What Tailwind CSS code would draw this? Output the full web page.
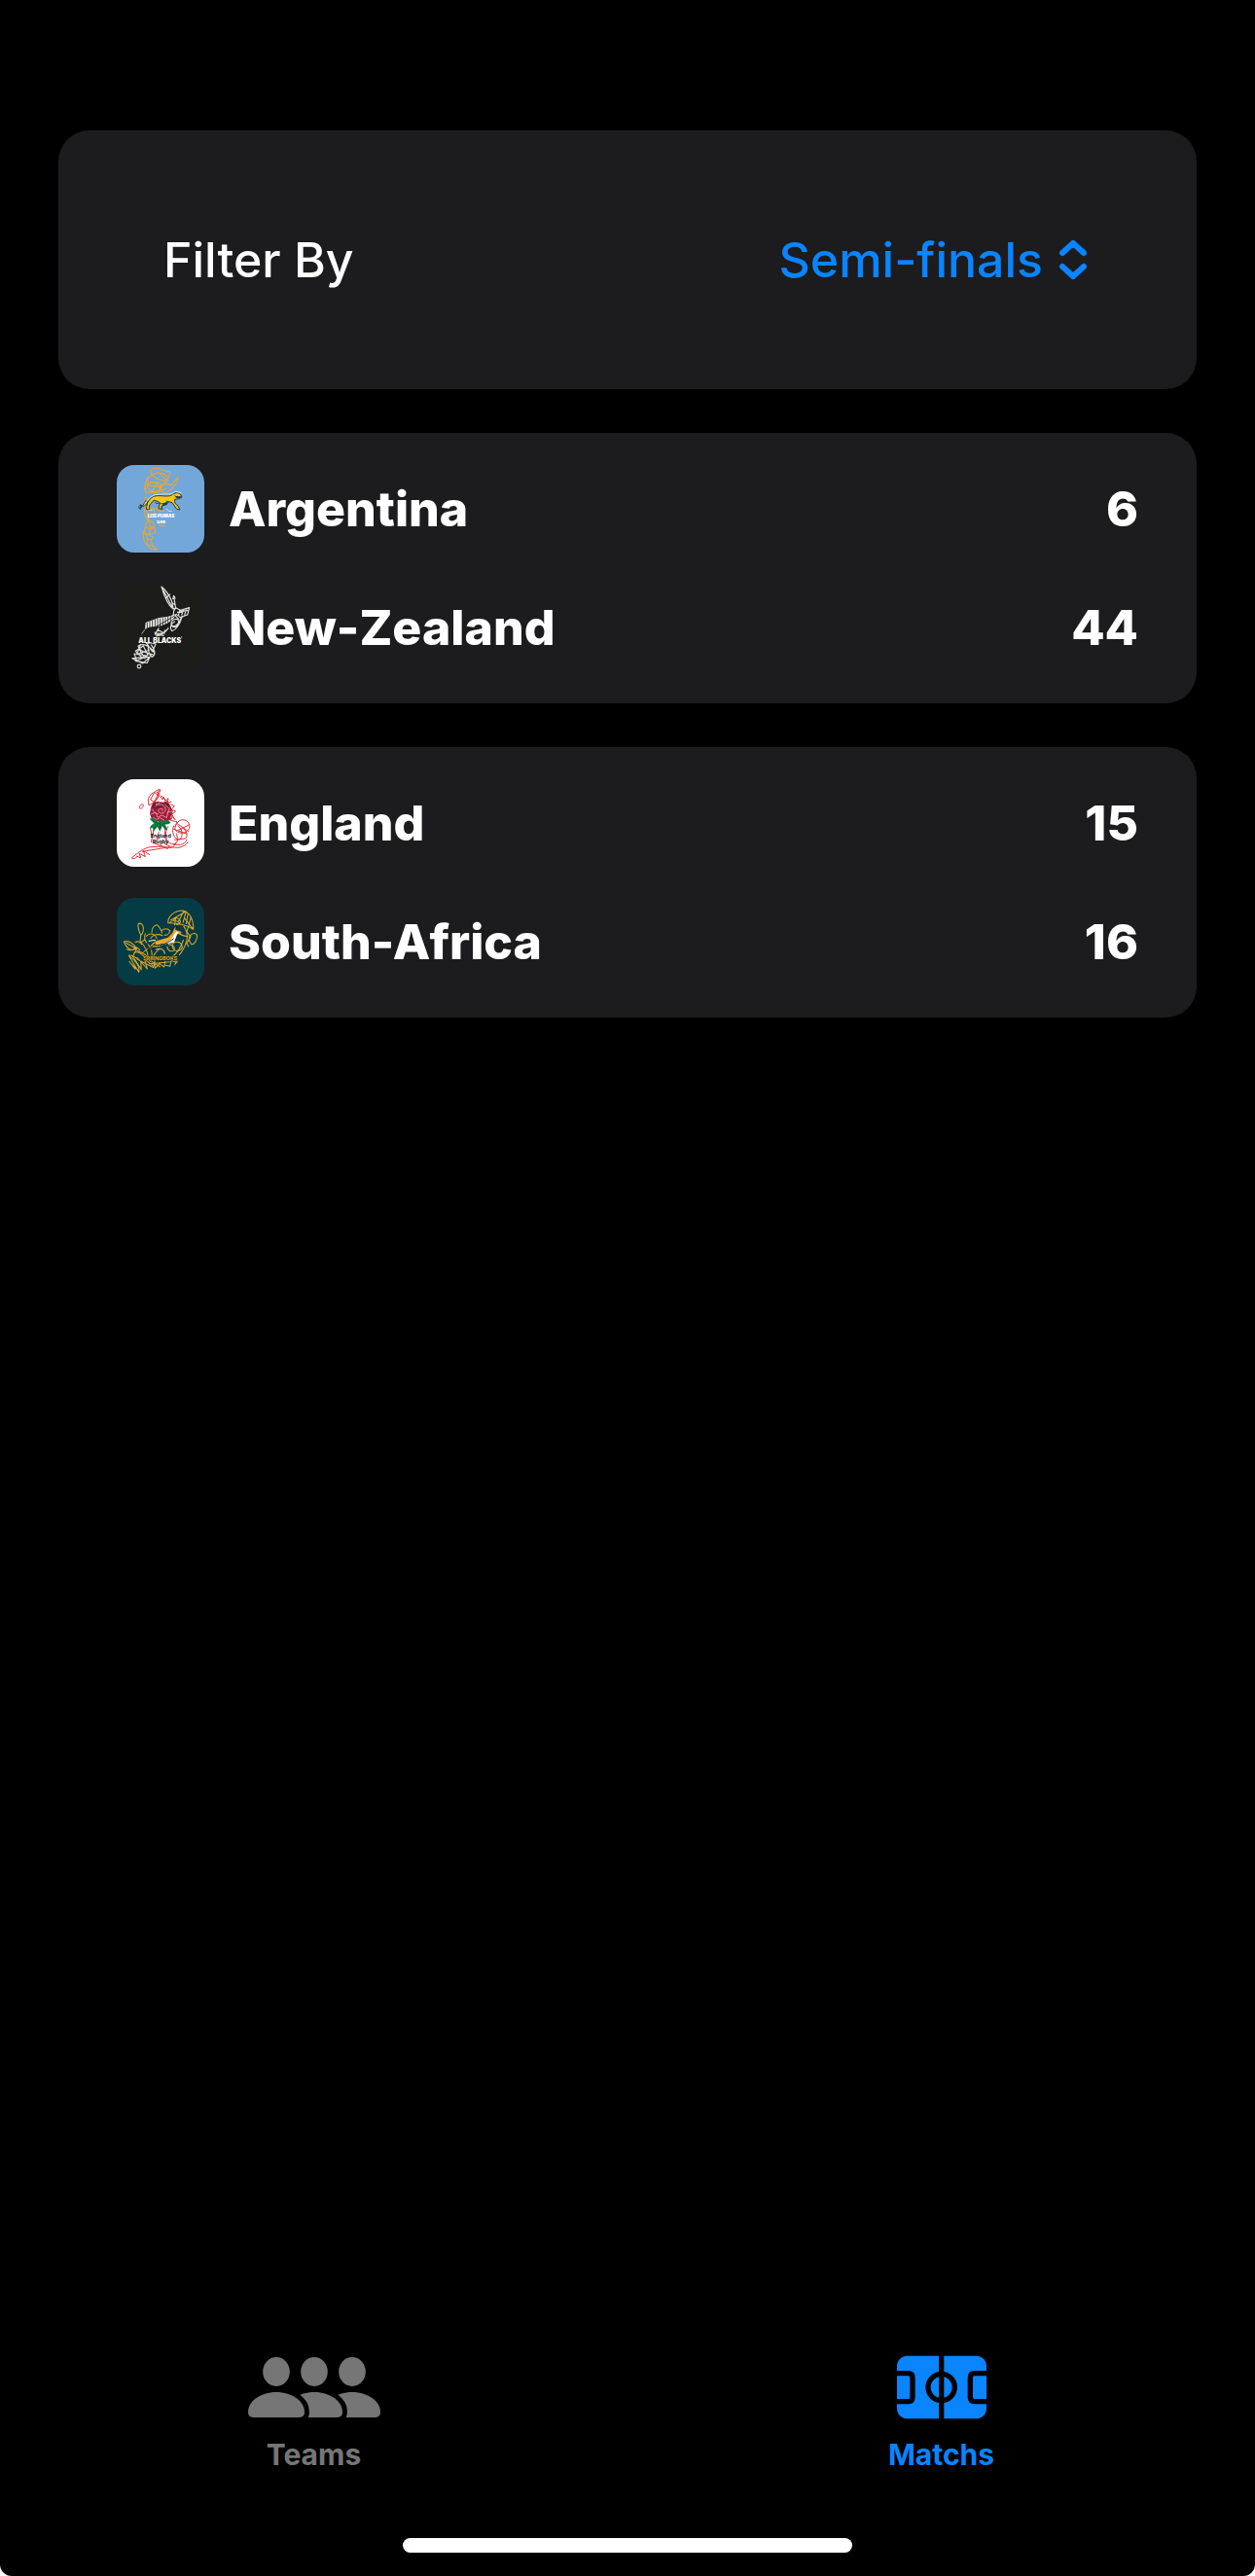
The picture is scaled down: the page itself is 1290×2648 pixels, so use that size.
<!DOCTYPE html>
<html lang="en" class="bg-white">
<head>
<meta charset="utf-8">
<meta name="viewport" content="width=device-width, initial-scale=1">
<title>Matchs</title>
<script src="https://cdn.jsdelivr.net/npm/@tailwindcss/browser@4"></script>
</head>
<body class="flex min-h-screen flex-col rounded-b-xl bg-black font-['Inter',sans-serif] text-white">
<main class="flex flex-1 flex-col gap-[45px] px-[60px] pt-[134px]">
  <form class="flex h-[266px] items-center justify-between rounded-[32px] bg-[#1c1c1e] pr-28 pl-[108px] text-[50px] leading-[60px] font-medium">
    <label for="round">Filter By</label>
    <div class="flex items-center gap-4 text-[#0a84ff]">
      <select id="round" class="field-sizing-content appearance-none bg-transparent">
        <option>Semi-finals</option>
      </select>
      <svg class="h-[42px] w-[30px]" viewBox="0 0 30 42" fill="none" stroke="currentColor" stroke-width="6" stroke-linecap="round" stroke-linejoin="round" aria-hidden="true"><path d="M4 14 15 4l11 10M4 28l11 10 11-10"/></svg>
    </div>
  </form>

  <ul class="flex flex-col gap-8 rounded-[32px] bg-[#1c1c1e] px-[60px] py-[33px] text-[50px] leading-[60px] font-extrabold">
    <li class="flex items-center">
      <svg class="size-[90px] rounded-[18px] bg-[#73a7da]" viewBox="30 30 270 270" aria-hidden="true">
        <g fill="none" stroke="#e3a936" stroke-width="3.5" stroke-linejoin="round">
          <path d="M133 48c8-12 28-9 40-3 9 5 14 7 22 5-2 12-4 20-12 26-18 5-44-8-50-28z"/>
          <path d="M140 60c16-12 40-4 48 10M127 68l30-16 30 28-28 18-34-6zM180 88l18 4 21-25c0 20-15 34-28 43-14 8-24 4-30-10z"/>
          <path d="M125 68c-8 18-8 30-6 46M132 84c22-6 42 2 34 18s-36 10-40-2 8-18 22-14M118 90c-4 16 0 24 6 30M122 112l30 4 30-14M134 118l20-32 16 20"/>
          <path d="M120 128c-8 14-6 28 0 38 6-12 10-24 4-36M134 136c-8 10-10 20 2 28 14 6 30-4 34-16M118 164c-6 14 0 26 8 36 4-12 0-24-8-36zM126 160c12 0 20 8 22 18-8 8-20 6-26-4M150 164c8 8 22 14 28 4"/>
          <path d="M130 196l-12 24c-6 14-2 22 10 26 6-12 6-30 2-50zM122 204c14-4 24 4 24 14-4 12-20 10-28 2M132 220l16 4v16l-20 2M112 236c-2 16 2 30 10 40 6-12 2-28-10-40zM122 246c8-4 18 0 20 10-6 6-16 4-20-2M122 276c12 0 20 4 32 14-10 2-20-2-30-10M136 262l4 16 14 12M160 215q10 6 18-1"/>
        </g>
        <path d="M104 166c-8 0-7-14 1-12 4 3 8 5 14-1 10-10 14-24 28-27 20-4 38 4 52-3 10-8 20-10 28-2l4 8-10 5-12 2c-2 10 2 14 10 20l6 12-10-2-14-20-16-4-18 16 4 8-12-2 4-18-18-8-14 16 0 14-10-2 4-22-6-4c-7 14-12 20-19 22z" fill="#f8c515" stroke="#173b53" stroke-width="3"/>
        <path d="M147 143c12 10 30 4 44 2l-8 9-10 2-8 14 8-19-22-2zM207 122l6 4 16 1-4 6-12-2zM104 166l6-10-8-5M128 138l10-9" fill="#173b53"/>
        <path d="M117 148q14-21 30-26 28-3 48-2l16-8 18 4M182 164l8 8h10M128 169h12" fill="none" stroke="#fff" stroke-width="2"/>
        <text x="125" y="191" class="fill-white font-['Inter'] text-[14px] font-black italic">LOS PUMAS</text>
        <text x="154" y="210" class="fill-white font-['Inter'] text-[12px] font-black">UAR</text>
      </svg>
      <span class="ml-[25px]">Argentina</span>
      <span class="ml-auto">6</span>
    </li>
    <li class="flex items-center">
      <svg class="size-[90px] rounded-[18px] bg-[#1c1c1a]" viewBox="30 30 270 270" aria-hidden="true">
        <g fill="none" stroke="#dedede" stroke-width="3.5" stroke-linejoin="round">
          <path d="M168 39c14 12 24 26 32 46l4 22c-16-10-28-40-36-68zM174 50l28 54M181 75l14-13M206 67l-3 9 7-1zM207 76l5 30-8 2-8-8M198 86l14 12"/>
          <path d="M212 104l14 8 28-8-6 22-22 8-12-10-10 8 2-18zM224 112l-4 18M236 110l-6 18M245 107l-6 20M216 118l34-6"/>
          <path d="M232 130c-6 20-18 42-32 46-8-10-4-24 10-30M203 142c18-10 24 8 10 16s-20-4-10-16M198 160c14 10 20 2 30-24M190 134l18-8 14 14"/>
          <path d="M190 166c-14 20-28 22-44 14M180 172c-4 12-16 18-30 20M155 172l24 12M160 166l-12 20 28 4"/>
          <path d="M96 222c14-10 32 0 42 10s12 20 0 16-42-8-42-26zM88 238l24-16 14 28-16 10zM122 214l18 26 10-24-16-4zM78 260l54-4-22 20zM84 246l40 6-32 16zM86 268l38 6 8-18M98 230l20 32M128 218c-4 18 4 36 12 38 14-8 4-26-4-38M104 216l-12 32 40-14"/>
          <circle cx="99" cy="285" r="5.500"/>
        </g>
        <path d="M105 188c6-14 18-24 34-25 26 0 56-8 74-38-14 4-34 8-52 10l-42 15-2 23-12 15" fill="#f4f4f4"/>
        <path d="M124 176v-26M132 172v-26M140 169v-26M148 167v-26M156 166v-28M164 163v-26M172 160v-24M180 156v-22M188 152v-20M196 146v-16M112 180q50-20 98-52" fill="none" stroke="#1c1c1a" stroke-width="2.500"/>
        <path d="M97 196h131v17H97z" fill="#1c1c1a"/>
        <text x="97" y="212" class="fill-white font-['Inter'] text-[21px] font-black">ALL BLACKS</text>
        <circle cx="230" cy="195" r="2" fill="#aaa"/>
      </svg>
      <span class="ml-[25px]">New-Zealand</span>
      <span class="ml-auto">44</span>
    </li>
  </ul>

  <ul class="flex flex-col gap-8 rounded-[32px] bg-[#1c1c1e] px-[60px] py-[33px] text-[50px] leading-[60px] font-extrabold">
    <li class="flex items-center">
      <svg class="size-[90px] rounded-[18px] bg-white" viewBox="30 27 270 270" aria-hidden="true">
        <g fill="none" stroke="#df3038" stroke-width="3" stroke-linejoin="round">
          <path d="M100 116c0-8 6-14 12-10 0 8-6 14-12 10zM127 92c2-18 16-24 34-34-4 14-8 28-16 38M134 90l12-22 14 10-14 20zM152 66c14 8 4 20-4 30M127 92l2 16 16-10M165 58l-6 18M163 76l8 14 4-8 4 12 10-8-2 14 12-4M168 78l22 22"/>
          <path d="M196 104l12 6-10 10 14 6-12 10 10 16-8-10-6 12 20 4-6 16M202 122l-4 22"/>
          <path d="M218 160c12-14 32-8 36 8 4 14-12 28-30 24s-18-20-6-32zM216 164l36 24M220 184l32-16M206 170c-8 20 0 40 16 44 14-8 12-34-4-44M230 174c18 12 20 28 12 36l-34 4M204 180l42 16M188 172c-10 20-10 42 6 52s30 0 20-30M180 180c-4 22 0 38 10 46M160 190l-8 30M134 180l6 26M144 184l-8 38M246 212c-2 14-20 22-44 14M250 220c-12 20-46 26-74 4"/>
          <path d="M212 222c-4 18-20 20-36 12l-42 2c-18 2-36 16-58 34 12 4 14 0 16-6l12 6-4-14 18 10-6-18 20 12M140 222l48 20M108 250l86-14"/>
        </g>
        <path d="M136 112l6-14 16-3 14 3 10-3 10 8 6 12 4 14-6 14 2 8-12 6-14 4-16-4-12 0-8-12-4-12z" fill="#a31c3c"/>
        <path d="M144 100l18 6 24-7 8 14-20-3-22 8-14-4z" fill="#68202e"/>
        <path d="M139 119c6 12 14 14 20 16M148 112c4-8 24-10 30 0s0 20-10 20-14-12-4-14 10 6 4 6M136 134l14-4 6 14 14-6 14 8 4-18 14-2M164 98l-14 8M178 104l14 14-6 16M142 145l10 6 12-5 14 9" fill="none" stroke="#f0b5bd" stroke-width="2.200"/>
        <path d="M131 149c10-4 18-2 26 10l8-5 8 2c8-4 18-2 24 4-6 6-12 8-18 6l8 18c-8-1-14-6-16-14l-8 18-8-14-12 15-2-12-10 3 4-10 10-7z" fill="#138044"/>
        <path d="M140 154l18 10-14 16M174 164l18-4M164 160v20M170 166l12 16" fill="none" stroke="#004d2c" stroke-width="2"/>
        <text x="134" y="208" class="fill-[#17171c] font-['Inter'] text-[16px] font-bold">England</text>
        <text x="140" y="225" class="fill-[#17171c] font-['Inter'] text-[16px] font-bold">Rugby</text>
      </svg>
      <span class="ml-[25px]">England</span>
      <span class="ml-auto">15</span>
    </li>
    <li class="flex items-center">
      <svg class="size-[90px] rounded-[18px] bg-[#053b44]" viewBox="30 27 270 270" aria-hidden="true">
        <g fill="none" stroke="#d7a72d" stroke-width="3.200" stroke-linejoin="round">
          <path d="M96 108c6-6 16 0 16 12s-4 20-8 22c-4-10-10-22-8-34zM104 142l-2 24 14-10M52 162c14-4 30 4 40 22-14 6-30 4-40-22zM58 166l30 16M60 184c10 8 20 4 30-4M92 184l-14 26M86 164c10-6 18 0 22 8M118 136c-4 14-2 24 6 30M120 146c14-14 30-8 34 8M138 134c0-14 6-22 16-24 8 6 12 14 16 26M134 152c8-12 24-16 38-8M168 128c10-8 20-6 26 0-2 12-10 16-18 12"/>
          <path d="M188 104c0-20 18-38 46-38 20 4 34 28 32 58-22-16-46-20-78-20zM196 96l48-28M238 66l-18 34M244 68l-10 36M250 74l-6 34M258 88l-6 24M206 98c0-10 12-12 18-4s-4 18-12 14M192 104c14-12 24-8 34 4M266 124l-28-36M208 112l4-22"/>
          <path d="M256 144c6-10 20-10 22 0 0 14-10 28-18 26-6-8-10-18-4-26zM252 112l-6 20 12 14-12 22 6 10M236 114c8 8 14 28 10 44s-12 32-24 46M236 156c-8 22-18 40-34 52M220 136c14 8 24 12 30 8M208 164c14-4 24 4 24 14s-18 18-26 8-6-16 2-22M190 170c12 0 20 8 18 18-10 8-24 0-22-12"/>
          <path d="M78 178c10-2 20 4 24 12M104 162c14 16 22 30 22 46M82 196c14-6 24 2 34 14M66 204c14 0 24 6 32 16M92 190c20 6 36 14 42 34M126 170c10 10 14 26 12 36M150 186c14-6 28 0 28 14M166 182c-14 8-20 16-22 26"/>
          <path d="M68 206l30 50c4-14-6-34-30-50zM68 222l20 26M74 230l26 24M80 208l26 40-2-26M92 210l32 36-8-30 28 22 4-20M104 222l40 20M112 206l52 34M146 218l2 26 14-14 14 10 4-18M178 234l16 4 4-18 14 6 2-14M208 234l10-12M130 230l64-6"/>
        </g>
        <path d="M104 204c6-7 14-14 26-20 6-14 12-20 24-25l34-10 14-14 8-20 4 12 14 4 2 5-13 3-8 18-8 10-10-2 4 12-8-10-20 2-14 8-20 2-18 11z" fill="#e9a72b"/>
        <path d="M148 180c20-10 44-10 58-38l8-12 8 4-7 6-8 24-22 4-18 6z" fill="#fff"/>
        <path d="M126 187l24-21M144 172c28 4 46-8 62-20M126 190l18-7M212 113l-10 10M216 115l-5 10" fill="none" stroke="#181c1a" stroke-width="3"/>
        <path d="M128 160l22-3" stroke="#fff" stroke-width="3"/>
        <text x="112" y="218" stroke="#332a16" stroke-width="3" paint-order="stroke" class="fill-[#d7a72d] font-['Inter'] text-[16px] font-bold">SPRINGBOKS</text>
      </svg>
      <span class="ml-[25px]">South-Africa</span>
      <span class="ml-auto">16</span>
    </li>
  </ul>
</main>

<footer class="flex flex-col items-center gap-[68px] pb-6">
  <nav class="grid w-full grid-cols-2 text-[30px] leading-9 font-bold">
    <a href="#teams" class="flex flex-col items-center gap-[18px] text-[#767676]">
      <span class="flex h-[66px] items-center">
        <svg class="h-[62px] w-[136px]" viewBox="69 72 408 186" fill="currentColor" aria-hidden="true">
          <defs><path id="shoulders" d="M69 241C69 210 105 180 156 180s87 30 87 61q0 17-16 17H85q-16 0-16-17z"/></defs>
          <ellipse cx="156" cy="117" rx="41.500" ry="45"/><ellipse cx="273" cy="117" rx="41.500" ry="45"/><ellipse cx="390" cy="117" rx="41.500" ry="45"/>
          <use href="#shoulders" x="234"/>
          <use href="#shoulders" x="117" stroke="#000" stroke-width="30"/><use href="#shoulders" x="117"/>
          <use href="#shoulders" stroke="#000" stroke-width="30"/><use href="#shoulders"/>
        </svg>
      </span>
      Teams
    </a>
    <a href="#matchs" aria-current="page" class="flex flex-col items-center gap-[18px] text-[#0a84ff]">
      <svg class="h-[66px] w-[92px]" viewBox="93 65 276 198" aria-hidden="true">
        <rect x="93" y="67" width="276" height="194" rx="32" fill="currentColor"/>
        <path d="M230 60V270M90 121h38q13 0 13 13v61q0 13-13 13H90M372 121h-40q-13 0-13 13v61q0 13 13 13h40" fill="none" stroke="#000" stroke-width="16"/>
        <circle cx="230" cy="164" r="41" fill="none" stroke="#000" stroke-width="16"/>
      </svg>
      Matchs
    </a>
  </nav>
  <div class="h-[15px] w-[462px] rounded-full bg-white"></div>
</footer>
</body>
</html>
